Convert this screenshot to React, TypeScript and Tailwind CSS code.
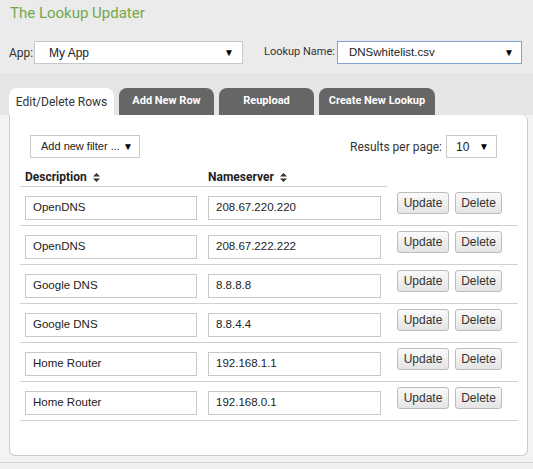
import React from "react";

const rows = [
  ["OpenDNS", "208.67.220.220"],
  ["OpenDNS", "208.67.222.222"],
  ["Google DNS", "8.8.8.8"],
  ["Google DNS", "8.8.4.4"],
  ["Home Router", "192.168.1.1"],
  ["Home Router", "192.168.0.1"],
];

const arial = { fontFamily: '"Liberation Sans", Arial, sans-serif' };

function SortIcon() {
  return (
    <svg width="7" height="9" viewBox="0 0 7 9" className="ml-[6px] inline-block">
      <path d="M3.5 0 L7 3.5 L0 3.5 Z" fill="#333" />
      <path d="M0 5.5 L7 5.5 L3.5 9 Z" fill="#333" />
    </svg>
  );
}

function Arrow() {
  return <span className="text-[10px] leading-none text-black">▼</span>;
}

function Btn({ label, w }: { label: string; w: string }) {
  return (
    <button
      className={`${w} h-[22px] rounded-[3px] border border-[#bcbcbc] bg-gradient-to-b from-[#fafafa] to-[#e4e4e4] text-[12px] text-[#333] leading-none flex items-center justify-center`}
      style={arial}
    >
      {label}
    </button>
  );
}

export default function App() {
  return (
    <div
      className="w-[533px] h-[469px] bg-[#f3f3f3] overflow-hidden flex flex-col whitespace-nowrap"
      style={{ fontFamily: "Roboto, Arial, sans-serif" }}
    >
      <div className="h-[73px] bg-[#ebebeb] px-[9px] flex flex-col">
        <div className="pt-[3px] pl-px text-[15px] leading-[20px] text-[#72a84c]">The Lookup Updater</div>
        <div className="mt-[18px] flex items-center h-[23px]">
          <span className="text-[12px] text-[#333] w-[25px] shrink-0">App:</span>
          <div
            className="w-[209px] shrink-0 h-[23px] bg-white border border-[#c8c8c8] flex items-center justify-between pl-[14px] pr-[8px] text-[12px] text-[#222]"
            style={arial}
          >
            <span>My App</span>
            <Arrow />
          </div>
          <span className="ml-[21px] text-[11px] text-[#333] w-[73px] shrink-0">Lookup Name:</span>
          <div
            className="w-[185px] shrink-0 h-[23px] bg-white border border-[#7fa4d4] flex items-center justify-between pl-[11px] pr-[7px] text-[11.5px] text-[#222]"
            style={arial}
          >
            <span>DNSwhitelist.csv</span>
            <Arrow />
          </div>
        </div>
      </div>
      <div className="h-[42px] bg-[#e5e5e5] px-[9px] flex items-end gap-[5px]">
        <div className="w-[105px] h-[27px] bg-white rounded-t-[8px] flex items-center justify-center text-[12px] text-[#333]">
          Edit/Delete Rows
        </div>
        <div className="w-[95px] h-[27px] bg-[#666666] rounded-t-[8px] flex items-center justify-center text-[11px] font-bold text-white">
          Add New Row
        </div>
        <div className="w-[95px] h-[27px] bg-[#666666] rounded-t-[8px] flex items-center justify-center text-[11px] font-bold text-white">
          Reupload
        </div>
        <div className="w-[116px] h-[27px] bg-[#666666] rounded-t-[8px] flex items-center justify-center text-[11px] font-bold text-white">
          Create New Lookup
        </div>
      </div>
      <div className="ml-[9px] w-[519px] h-[341px] bg-white border border-t-0 border-[#cccccc] rounded-b-[6px] rounded-tr-[6px] relative">
        <div className="pt-[20px] pl-[20px] pr-[30px] flex justify-between items-center">
          <div
            className="w-[110px] h-[23px] border border-[#c8c8c8] flex items-center justify-between pl-[10px] pr-[6px] text-[11px] text-[#222]"
            style={arial}
          >
            <span>Add new filter ...</span>
            <Arrow />
          </div>
          <div className="flex items-center">
            <span className="text-[12px] text-[#333] mr-[4px]">Results per page:</span>
            <div
              className="w-[51px] h-[23px] border border-[#c8c8c8] flex items-center justify-between pl-[9px] pr-[7px] text-[12px] text-[#222]"
              style={arial}
            >
              <span>10</span>
              <Arrow />
            </div>
          </div>
        </div>
        <div className="ml-[10px] mt-[12px] w-[498px]">
          <div className="flex">
            <div className="w-[367px] border-b border-[#cfcfcf] flex h-[17px] items-start">
              <div className="w-[183px] pl-[5px] text-[12px] font-bold text-[#222] leading-[14px] flex items-center">
                Description <SortIcon />
              </div>
              <div className="w-[184px] pl-[5px] text-[12px] font-bold text-[#222] leading-[14px] flex items-center">
                Nameserver <SortIcon />
              </div>
            </div>
          </div>
          {rows.map(([d, ip], i) => (
            <div key={i} className="flex border-b border-[#d0d0d0] pt-[9px] pb-[5px]">
              <div className="w-[183px] pl-[5px]">
                <div
                  className="w-[172px] h-[24px] border border-[#c8c8c8] flex items-center pl-[7px] text-[11.5px] text-[#222]"
                  style={arial}
                >
                  {d}
                </div>
              </div>
              <div className="w-[184px] pl-[5px]">
                <div
                  className="w-[173px] h-[24px] border border-[#c8c8c8] flex items-center pl-[7px] text-[11.5px] text-[#222]"
                  style={arial}
                >
                  {ip}
                </div>
              </div>
              <div className="pl-[10px] flex gap-[6px] -mt-[4px]">
                <Btn label="Update" w="w-[52px]" />
                <Btn label="Delete" w="w-[47px]" />
              </div>
            </div>
          ))}
        </div>
      </div>
      <div className="h-[6px]" />
      <div className="flex-1 border-t border-[#d4d4d4] bg-[#f0f0f0]" />
    </div>
  );
}
